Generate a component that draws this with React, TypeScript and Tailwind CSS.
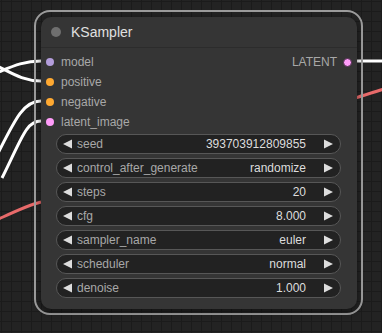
const inputs = [
  { name: "model", color: "bg-[#b39ddb]" },
  { name: "positive", color: "bg-[#ffa931]" },
  { name: "negative", color: "bg-[#ffa931]" },
  { name: "latent_image", color: "bg-[#ff9cf9]" },
];

const widgets = [
  { name: "seed", value: "393703912809855" },
  { name: "control_after_generate", value: "randomize" },
  { name: "steps", value: "20" },
  { name: "cfg", value: "8.000" },
  { name: "sampler_name", value: "euler" },
  { name: "scheduler", value: "normal" },
  { name: "denoise", value: "1.000" },
];

function Arrow({ dir }: { dir: "left" | "right" }) {
  return (
    <svg width="9" height="10" viewBox="0 0 9 10" className="shrink-0">
      <polygon
        points={dir === "left" ? "9,0.5 9,9.5 0,5" : "0,0.5 0,9.5 9,5"}
        fill="#dddddd"
      />
    </svg>
  );
}

function Wires() {
  return (
    <svg width="382" height="333" className="absolute inset-0" fill="none">
      <g stroke="#ffffff" strokeWidth="3">
        <path d="M -40 84 C 0 76, 12 61, 41 61" />
        <path d="M -40 54 C 0 60, 12 81, 41 81" />
        <path d="M -8 165 C 14 122, 22 101, 41 101" />
        <path d="M 2 178 C 22 138, 26 121, 41 121" />
        <path d="M 352 61 L 382 61" />
      </g>
      <g stroke="#e86a6a" strokeWidth="3">
        <path d="M -10 223 C 10 214, 25 206, 41 202" />
        <path d="M 355 98 C 365 95, 374 92, 384 89" />
      </g>
    </svg>
  );
}

export default function App() {
  return (
    <div
      className="relative w-[382px] h-[333px] overflow-hidden bg-[#232323] bg-[linear-gradient(#1b1b1b_1px,transparent_1px),linear-gradient(90deg,#1b1b1b_1px,transparent_1px)] bg-size-[10px_10px] bg-position-[1px_1px]"
      style={{ fontFamily: '"Liberation Sans", Arial, sans-serif' }}
    >
      <Wires />

      {/* selection outline + node */}
      <div className="absolute left-[34px] top-[10px] w-[329px] h-[305px] rounded-[16px] border-2 border-[#9c9c9c] pl-[5px] pt-[5px]">
        <div className="w-[316px] h-[292px] rounded-[10px] bg-[#353535] shadow-[0_2px_6px_rgba(0,0,0,0.5)] flex flex-col">
          <div className="h-[31px] flex items-center gap-[10px] pl-[10px] border-b border-[#2c2c2c]">
            <div className="w-[10px] h-[10px] rounded-full bg-[#6f6f6f]" />
            <span className="text-[14px] text-[#e0e0e0]">KSampler</span>
          </div>

          <div className="flex justify-between pt-[4px]">
            <div className="flex flex-col">
              {inputs.map((s) => (
                <div key={s.name} className="h-[20px] flex items-center pl-[5px]">
                  <div className={`w-[8px] h-[8px] rounded-full ${s.color}`} />
                  <span className="ml-[7px] text-[12px] text-[#a8a8a8]">{s.name}</span>
                </div>
              ))}
            </div>
            <div className="h-[20px] flex items-center pr-[5px]">
              <span className="text-[12px] text-[#a8a8a8]">LATENT</span>
              <div className="ml-[6px] w-[9px] h-[9px] rounded-full bg-[#ff9cf9] border border-[#4a2a48]" />
            </div>
          </div>

          <div className="flex flex-col gap-[4px] pl-[15px] pr-[16px] pt-[2px]">
            {widgets.map((w) => (
              <div
                key={w.name}
                className="h-[20px] rounded-full bg-[#222222] border border-[#575757] flex items-center pl-[6px] pr-[7px] text-[12px]"
              >
                <Arrow dir="left" />
                <span className="ml-[5px] text-[#a8a8a8]">{w.name}</span>
                <span className="ml-auto mr-[18px] text-[#dddddd]">{w.value}</span>
                <Arrow dir="right" />
              </div>
            ))}
          </div>
        </div>
      </div>
    </div>
  );
}
